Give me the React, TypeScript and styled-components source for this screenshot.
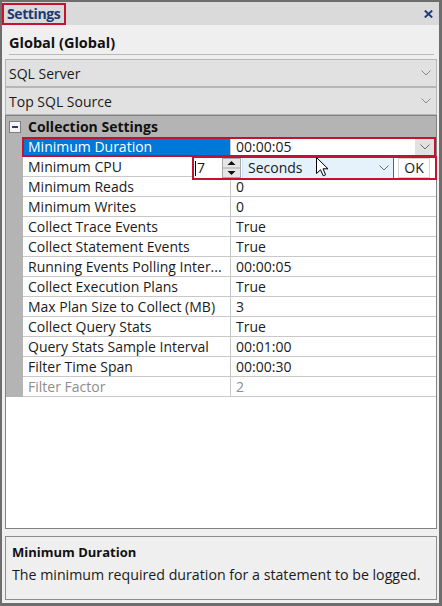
import * as React from 'react';
import styled, { createGlobalStyle } from 'styled-components';

const GlobalStyle = createGlobalStyle`
  html, body { margin: 0; padding: 0; background: #ffffff; }
  body { font-family: "Open Sans", "Noto Sans", sans-serif; color: #1a1a1a; }
  * { box-sizing: border-box; }
`;

const Window = styled.div`
  width: 442px;
  height: 606px;
  border: solid #6d6d6d;
  border-width: 2px 3px 3px 2px;
  display: flex;
  flex-direction: column;
  background: #efefef;
`;

const TitleBar = styled.div`
  height: 23px;
  flex-shrink: 0;
  background: #dadada;
  display: flex;
  align-items: flex-start;
  justify-content: space-between;
`;

const TitleText = styled.div`
  margin-top: 1px;
  height: 22px;
  border: 2px solid #c4122f;
  padding: 0 4px 0 3px;
  font-size: 14px;
  font-weight: 700;
  letter-spacing: -0.4px;
  line-height: 18px;
  color: #1c3b78;
`;

const Close = styled.svg`
  margin: 8px 6px 0 0;
`;

const Body = styled.div`
  flex: 1;
  display: flex;
  flex-direction: column;
  padding: 0 2px 3px 3px;
  min-height: 0;
`;

const ObjectHeader = styled.div`
  height: 30px;
  margin: 0 3px 4px 4px;
  padding-top: 7px;
  border-bottom: 1px solid #b9b9b9;
  font-size: 14.5px;
  font-weight: 700;
  line-height: 22px;
  color: #111;
`;

const Combo = styled.div`
  height: 28px;
  flex-shrink: 0;
  border: 1px solid #b6b6b6;
  background: #e1e1e1;
  display: flex;
  align-items: center;
  justify-content: space-between;
  padding: 0 5px 0 3px;
  font-size: 14px;
`;

const Grid = styled.div`
  flex: 1;
  position: relative;
  border: 1px solid #828282;
  background: #ffffff;
`;

const CategoryRow = styled.div`
  height: 21px;
  background: #b4b4b4;
  display: flex;
  align-items: center;
  padding-left: 3px;
  gap: 7px;
  font-size: 14px;
  font-weight: 700;
  color: #111;
`;

const MinusBox = styled.div`
  width: 12px;
  height: 12px;
  border: 1px solid #7e7e7e;
  background: #f4f4f4;
  display: flex;
  align-items: center;
  justify-content: center;
  &::after {
    content: '';
    width: 6px;
    height: 2px;
    background: #2b3f66;
  }
`;

const Row = styled.div`
  display: flex;
  height: 20px;
  font-size: 14px;
  line-height: 19px;
`;

const Gutter = styled.div`
  width: 17px;
  background: #b4b4b4;
`;

const NameCell = styled.div<{ $selected?: boolean; $disabled?: boolean }>`
  width: 208px;
  padding-left: 5px;
  border-right: 1px solid #c8c8c8;
  border-bottom: 1px solid #c8c8c8;
  background: ${p => (p.$selected ? '#0078d7' : '#ffffff')};
  color: ${p => (p.$selected ? '#ffffff' : p.$disabled ? '#8d8d8d' : '#1a1a1a')};
  white-space: nowrap;
  overflow: hidden;
`;

const ValueCell = styled.div<{ $disabled?: boolean }>`
  flex: 1;
  display: flex;
  align-items: center;
  justify-content: space-between;
  padding-left: 5px;
  border-bottom: 1px solid #c8c8c8;
  color: ${p => (p.$disabled ? '#8d8d8d' : '#1a1a1a')};
`;

const DropButton = styled.div`
  width: 19px;
  height: 17px;
  margin-right: 2px;
  background: #e1e1e1;
  display: flex;
  align-items: center;
  justify-content: center;
`;

const Highlight = styled.div`
  position: absolute;
  left: 16px;
  top: 21px;
  width: 414px;
  height: 20px;
  border: 2px solid #c4122f;
`;

const Editor = styled.div`
  position: absolute;
  left: 186px;
  top: 40px;
  width: 245px;
  height: 24px;
  border: 2px solid #c4122f;
  background: #ffffff;
  display: flex;
  font-size: 14px;
  line-height: 20px;
`;

const NumberInput = styled.div`
  width: 28px;
  padding-left: 1px;
  display: flex;
  align-items: center;
  &::before {
    content: '';
    width: 1px;
    height: 15px;
    background: #000;
    margin-right: 1px;
  }
`;

const Spinner = styled.svg`
  flex-shrink: 0;
`;

const UnitSelect = styled.div`
  width: 152px;
  margin-left: 1px;
  padding: 0 4px 0 5px;
  background: #e5f1fb;
  border-left: 1px solid #cce4f7;
  border-right: 1px solid #0078d7;
  display: flex;
  align-items: center;
  justify-content: space-between;
`;

const OkButton = styled.div`
  width: 32px;
  margin-left: 4px;
  border: 1px solid #d4d4d4;
  background: #fdfdfd;
  text-align: center;
  line-height: 18px;
`;

const Cursor = styled.svg`
  position: absolute;
  left: 310px;
  top: 41px;
`;

const Description = styled.div`
  height: 64px;
  flex-shrink: 0;
  margin-top: 7px;
  border: 1px solid #8c8c8c;
  padding: 5px 6px 0 6px;
`;

const DescTitle = styled.div`
  font-size: 13px;
  font-weight: 700;
  line-height: 20px;
  color: #111;
`;

const DescText = styled.div`
  margin-top: 2px;
  font-size: 14.2px;
  line-height: 22px;
`;

const Chevron = ({ color = '#6d6d6d' }: { color?: string }) => (
  <svg width="10" height="6" viewBox="0 0 10 6">
    <path d="M0.5 0.5 L5 5 L9.5 0.5" fill="none" stroke={color} strokeWidth="1" />
  </svg>
);

const rows = [
  { name: 'Minimum Duration', value: '00:00:05', selected: true },
  { name: 'Minimum CPU', value: '' },
  { name: 'Minimum Reads', value: '0' },
  { name: 'Minimum Writes', value: '0' },
  { name: 'Collect Trace Events', value: 'True' },
  { name: 'Collect Statement Events', value: 'True' },
  { name: 'Running Events Polling Inter...', value: '00:00:05' },
  { name: 'Collect Execution Plans', value: 'True' },
  { name: 'Max Plan Size to Collect (MB)', value: '3' },
  { name: 'Collect Query Stats', value: 'True' },
  { name: 'Query Stats Sample Interval', value: '00:01:00' },
  { name: 'Filter Time Span', value: '00:00:30' },
  { name: 'Filter Factor', value: '2', disabled: true },
];

const App = () => (
  <>
    <GlobalStyle />
    <Window>
      <TitleBar>
        <TitleText>Settings</TitleText>
        <Close width="9" height="8" viewBox="0 0 9 8">
          <path d="M0.8 0.5 L8.2 7.5 M8.2 0.5 L0.8 7.5" stroke="#1c3b78" strokeWidth="1.9" />
        </Close>
      </TitleBar>
      <Body>
        <ObjectHeader>Global (Global)</ObjectHeader>
        <Combo>
          <span>SQL Server</span>
          <Chevron color="#8a8a8a" />
        </Combo>
        <Combo>
          <span>Top SQL Source</span>
          <Chevron color="#8a8a8a" />
        </Combo>
        <Grid>
          <CategoryRow>
            <MinusBox />
            <span>Collection Settings</span>
          </CategoryRow>
          {rows.map(r => (
            <Row key={r.name}>
              <Gutter />
              <NameCell $selected={r.selected} $disabled={r.disabled}>{r.name}</NameCell>
              <ValueCell $disabled={r.disabled}>
                <span>{r.value}</span>
                {r.selected && (
                  <DropButton>
                    <Chevron />
                  </DropButton>
                )}
              </ValueCell>
            </Row>
          ))}
          <Highlight />
          <Editor>
            <NumberInput>7</NumberInput>
            <Spinner width="19" height="20" viewBox="0 0 19 20">
              <rect x="0.5" y="0.5" width="18" height="19" fill="#e6e6e6" stroke="#a9a9a9" />
              <line x1="1" y1="10" x2="18" y2="10" stroke="#a9a9a9" />
              <path d="M5.5 7 L9.5 3 L13.5 7 Z" fill="#111" />
              <path d="M5.5 13 L13.5 13 L9.5 17 Z" fill="#111" />
            </Spinner>
            <UnitSelect>
              <span>Seconds</span>
              <Chevron />
            </UnitSelect>
            <OkButton>OK</OkButton>
          </Editor>
          <Cursor width="13" height="20" viewBox="0 0 13 20">
            <path
              d="M0.5 0.5 L0.5 16.5 L4.5 12.8 L7.2 18.8 L9.6 17.8 L7 11.8 L12 11.8 Z"
              fill="#ffffff"
              stroke="#000000"
              strokeWidth="1"
              strokeLinejoin="round"
            />
          </Cursor>
        </Grid>
        <Description>
          <DescTitle>Minimum Duration</DescTitle>
          <DescText>The minimum required duration for a statement to be logged.</DescText>
        </Description>
      </Body>
    </Window>
  </>
);

export default App;
